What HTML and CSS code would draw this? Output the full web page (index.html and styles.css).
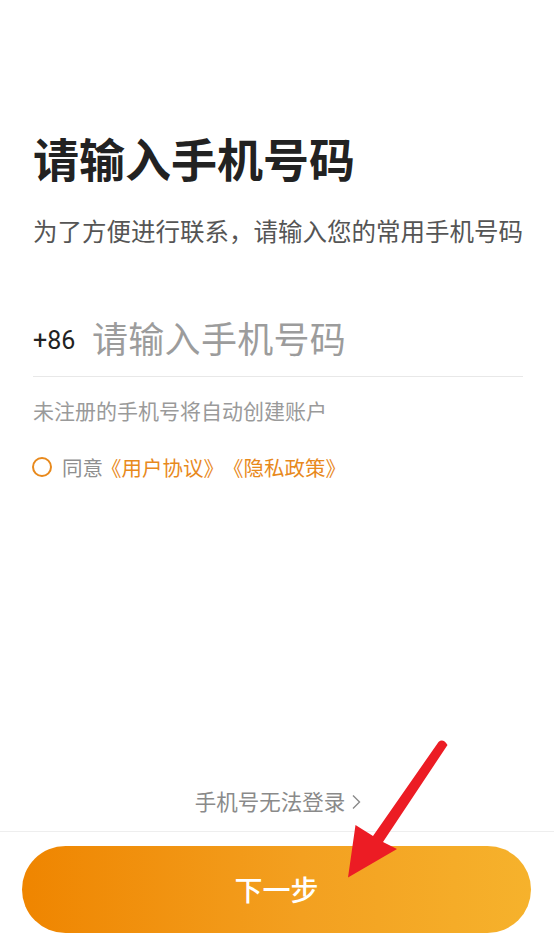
FILE: index.html
```html
<!DOCTYPE html>
<html lang="zh-CN">
<head>
<meta charset="utf-8">
<title>请输入手机号码</title>
<link rel="stylesheet" href="styles.css">
</head>
<body>
<div class="page">
  <main class="content">
    <h1 class="title">请输入手机号码</h1>
    <p class="subtitle">为了方便进行联系，请输入您的常用手机号码</p>
    <div class="phone-row">
      <span class="prefix">+86</span>
      <span class="placeholder">请输入手机号码</span>
    </div>
    <p class="hint">未注册的手机号将自动创建账户</p>
    <div class="agree">
      <span class="radio"></span>
      <span class="agree-text">同意</span>
      <span class="link link-first">《用户协议》</span>
      <span class="link link-second">《隐私政策》</span>
    </div>
  </main>
  <div class="spacer"></div>
  <div class="help">
    <span>手机号无法登录</span>
    <svg class="chev" width="12" height="18" viewBox="0 0 12 18"><path d="M3 2.5 L9.5 9 L3 15.5" fill="none" stroke="#8a8a8a" stroke-width="1.4"/></svg>
  </div>
  <footer class="footer">
    <button class="next">下一步</button>
  </footer>
  <svg class="arrow" width="554" height="945" viewBox="0 0 554 945">
    <path d="M438.5 742 Q443 738 447.5 745 L383 842 L397 849 L348 877.5 L355.5 825 L373 836 Z" fill="#ec1c24"/>
  </svg>
</div>
</body>
</html>
```
FILE: styles.css
```css
* { box-sizing: border-box; }
html, body { margin: 0; padding: 0; background: #fff; }
body {
  font-family: "Noto Sans CJK SC", "Noto Sans", sans-serif;
  color: #222;
}
.page {
  position: relative;
  width: 554px;
  height: 945px;
  display: flex;
  flex-direction: column;
  overflow: hidden;
}
.content {
  padding: 127px 31px 0 33px;
  display: flex;
  flex-direction: column;
}
.title {
  margin: 0;
  font-size: 46px;
  line-height: 60px;
  font-weight: 700;
  color: #222;
}
.subtitle {
  margin: 26px 0 0;
  font-size: 24.5px;
  line-height: 36px;
  color: #555;
  white-space: nowrap;
}
.phone-row {
  margin-top: 54px;
  height: 74px;
  display: flex;
  align-items: center;
  border-bottom: 1px solid #e8e8e8;
}
.prefix {
  font-family: "Roboto", "Noto Sans", sans-serif;
  font-size: 25px;
  color: #222;
  width: 59px;
  margin-top: 2px;
}
.placeholder {
  font-size: 36px;
  line-height: 50px;
  color: #9c9c9c;
  letter-spacing: 0.3px;
  margin-bottom: 5px;
}
.hint {
  margin: 18px 0 0;
  font-size: 21px;
  line-height: 30px;
  color: #9a9a9a;
}
.agree {
  margin-top: 27px;
  display: flex;
  align-items: center;
  height: 30px;
  font-size: 20.5px;
  line-height: 30px;
}
.radio {
  width: 20px;
  height: 20px;
  border: 2px solid #e8891c;
  border-radius: 50%;
  margin-left: -1px;
  margin-right: 10px;
}
.agree-text {
  color: #8f8f8f;
}
.link {
  color: #e8891c;
  white-space: nowrap;
}
.link-first { margin-left: -2px; }
.link-second { margin-left: -1px; }
.spacer { flex: 1; }
.help {
  display: flex;
  align-items: center;
  justify-content: center;
  gap: 5px;
  font-size: 21.5px;
  line-height: 30px;
  color: #8a8a8a;
  margin-bottom: 15px;
  padding-left: 3px;
}
.chev { margin-top: 1px; }
.footer {
  border-top: 1px solid #eeeeee;
  padding: 14px 23px 12px 22px;
}
.next {
  display: block;
  width: 100%;
  height: 87px;
  border: none;
  border-radius: 44px;
  background: linear-gradient(90deg, #ef8500 0%, #f3a020 55%, #f6b22c 100%);
  color: #fff;
  font-family: "Noto Sans CJK SC", sans-serif;
  font-size: 28px;
  font-weight: 500;
  padding: 0 0 2px;
}
.arrow {
  position: absolute;
  left: 0;
  top: 0;
  pointer-events: none;
}
```
